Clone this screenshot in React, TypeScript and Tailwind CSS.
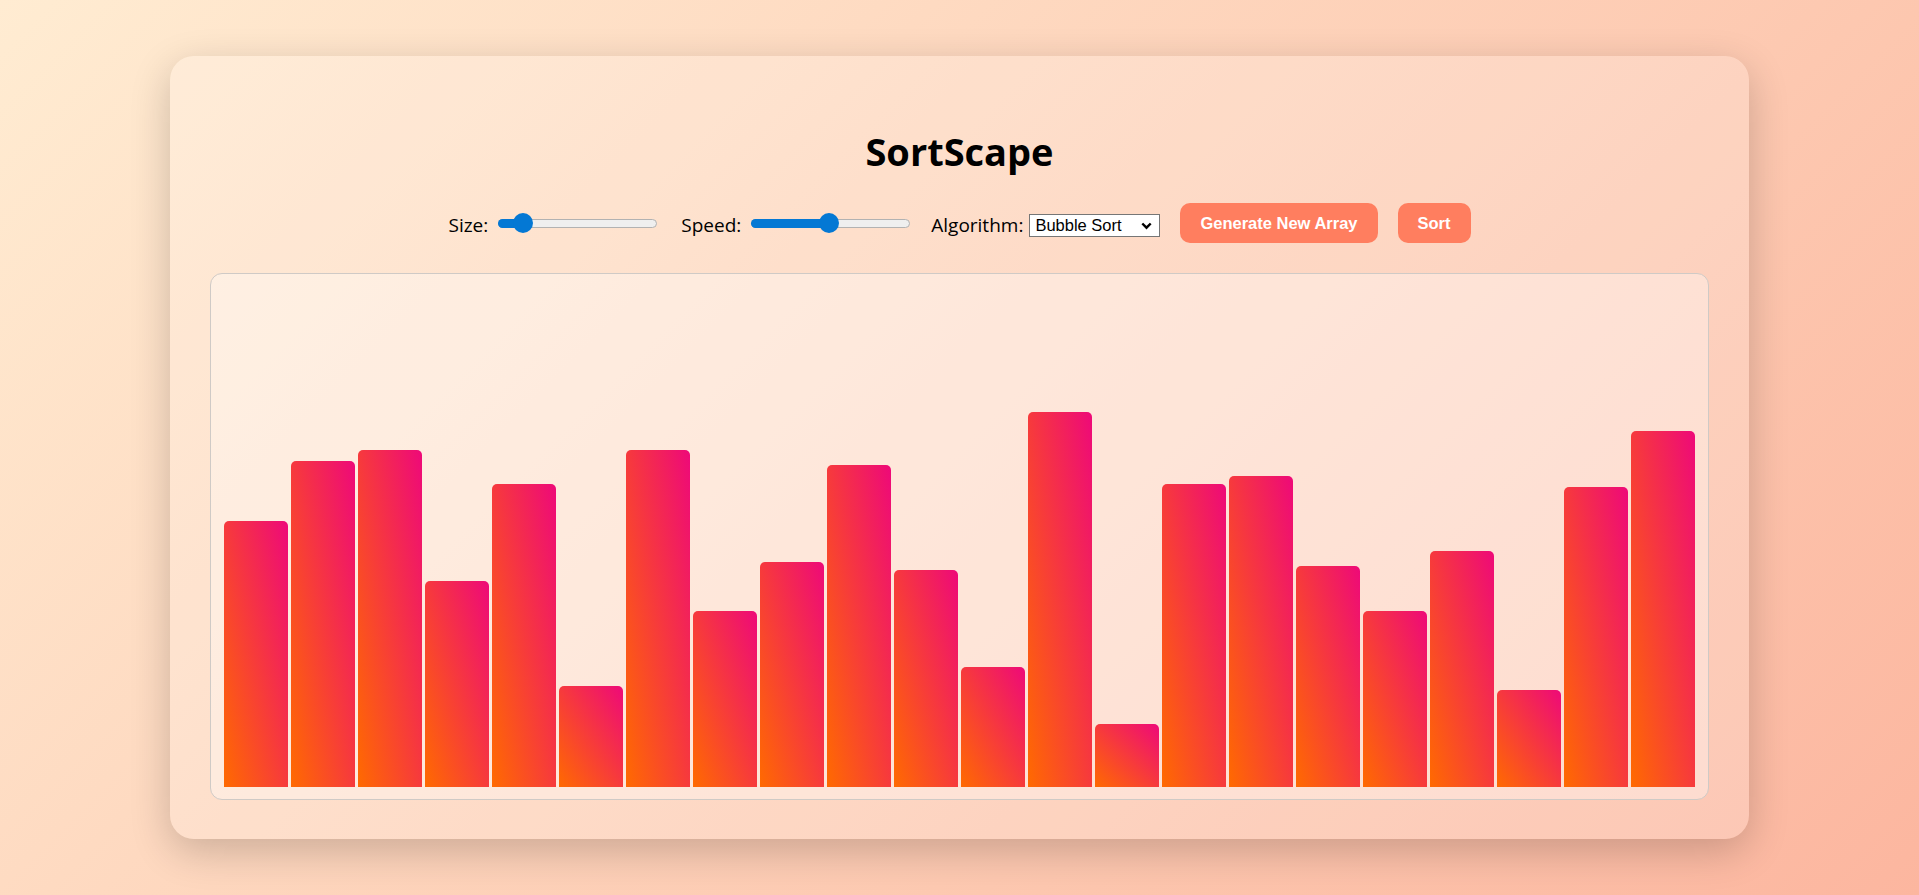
import React from "react";

const heights = [266, 326, 337, 206, 303, 101, 337, 176, 225, 322, 217, 120, 375, 63, 303, 311, 221, 176, 236, 97, 300, 356];

function Slider({ pos }: { pos: number }) {
  return (
    <div className="relative ml-[10px] flex h-[20px] w-[159px] items-center">
      <div className="relative h-[9px] w-full rounded-full border border-[#b2b2b2] bg-[#efefef]">
        <div
          className="absolute -top-[1px] -bottom-[1px] -left-[1px] rounded-full bg-[#0478d4]"
          style={{ width: pos + 1 }}
        />
      </div>
      <div
        className="absolute top-0 h-[20px] w-[20px] rounded-full bg-[#0478d4]"
        style={{ left: pos - 10 }}
      />
    </div>
  );
}

export default function App() {
  return (
    <div className="flex min-h-screen w-full items-center justify-center bg-[linear-gradient(135deg,#ffecd2_0%,#fcb69f_100%)] font-['Open_Sans',sans-serif] text-black">
      <div className="flex w-[1579px] flex-col rounded-[24px] bg-white/20 px-[40px] pt-[41px] pb-[39px] shadow-[0_12px_40px_rgba(0,0,0,0.2)]">
        <h1 className="mt-[35px] text-center text-[38px] leading-[38px] font-bold">SortScape</h1>

        <div className="mt-[33px] flex h-[40px] items-center justify-center">
          <div className="flex items-center">
            <span className="mt-[5px] text-[19px]">Size:</span>
            <Slider pos={25} />
          </div>
          <div className="ml-[24px] flex items-center">
            <span className="mt-[5px] text-[19px]">Speed:</span>
            <Slider pos={78} />
          </div>
          <div className="ml-[21px] flex items-center">
            <span className="mt-[5px] text-[19px]">Algorithm:</span>
            <div className="mt-[5px] ml-[6px] flex h-[23px] w-[131px] items-center justify-between border border-[#767676] bg-white pr-[7px] pl-[5px] font-['Liberation_Sans',Arial,sans-serif] text-[16.5px] leading-none text-black">
              <span>Bubble Sort</span>
              <svg width="11" height="8" viewBox="0 0 11 8" className="mt-[1px]">
                <path d="M1.3 1.5 L5.5 5.7 L9.7 1.5" fill="none" stroke="#000" strokeWidth="2.4" />
              </svg>
            </div>
          </div>
          <button className="ml-[20px] h-[40px] rounded-[10px] bg-[#ff7e5f] px-[20px] font-['Liberation_Sans',Arial,sans-serif] text-[16.5px] font-bold text-white">
            Generate New Array
          </button>
          <button className="ml-[20px] h-[40px] rounded-[10px] bg-[#ff7e5f] px-[20px] font-['Liberation_Sans',Arial,sans-serif] text-[16.5px] font-bold text-white">
            Sort
          </button>
        </div>

        <div className="mt-[30px] flex h-[527px] items-end justify-center gap-[3px] rounded-[12px] border border-[#cfcac6] bg-white/35 pb-[12px]">
          {heights.map((h, i) => (
            <div
              key={i}
              className="w-[64px] rounded-t-[5px] bg-[linear-gradient(to_top_right,#ff6a00,#ee0979)]"
              style={{ height: h }}
            />
          ))}
        </div>
      </div>
    </div>
  );
}
